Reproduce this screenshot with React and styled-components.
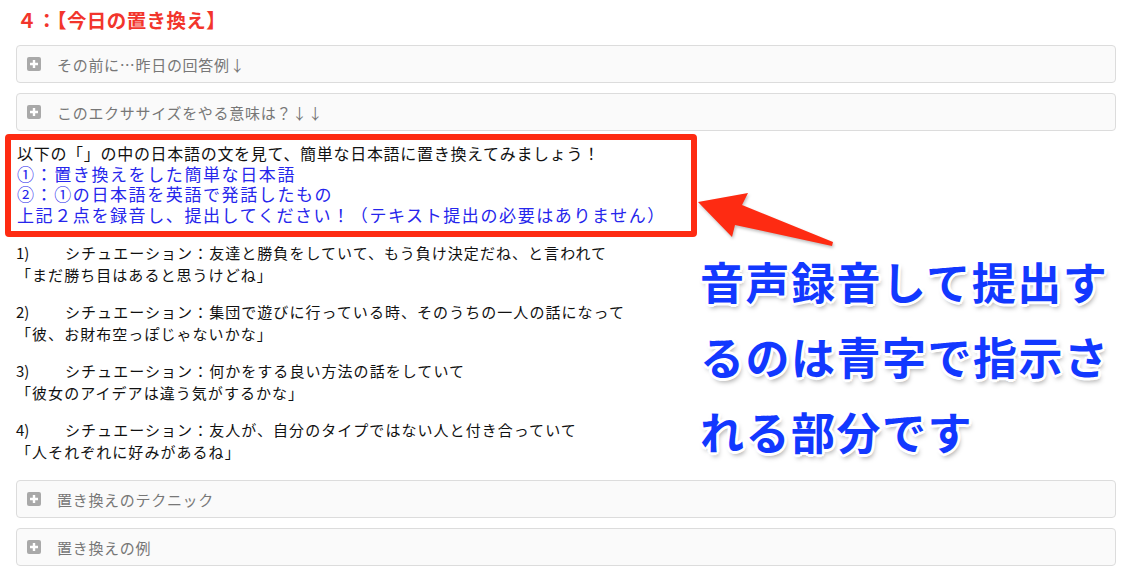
import React from 'react';
import styled, { createGlobalStyle } from 'styled-components';

const GlobalStyle = createGlobalStyle`
  html, body {
    margin: 0;
    padding: 0;
    background: #fff;
  }
  body {
    font-family: "Noto Sans CJK JP", "Noto Sans", sans-serif;
    color: #111;
  }
`;

const Page = styled.div`
  position: relative;
  padding: 6px 18px 0 16px;
`;

const Heading = styled.h2`
  margin: 0 0 11px 1px;
  font-size: 19.5px;
  line-height: 28px;
  font-weight: 700;
  letter-spacing: 0.4px;
  color: #f2352c;
`;

const Panel = styled.div`
  display: flex;
  align-items: center;
  gap: 16px;
  box-sizing: border-box;
  height: 38px;
  margin-top: ${(p) => p.$gap || 0}px;
  padding: 0 10px;
  border: 1px solid #dcdcdc;
  border-radius: 4px;
  background: #fafafa;
  font-size: 15px;
  letter-spacing: 0.7px;
  color: #777;
`;

const PlusBox = styled.span`
  display: flex;
  align-items: center;
  justify-content: center;
  width: 14px;
  height: 14px;
  border-radius: 2px;
  background: #a9a9a9;
  flex-shrink: 0;
`;

const Callout = styled.div`
  box-sizing: border-box;
  width: 692px;
  margin: 3px 0 0 -11px;
  padding: 3px 6px 6px;
  border: 6px solid #fe2b12;
  border-radius: 4px;
  line-height: 20.5px;
`;

const Line = styled.div`
  white-space: nowrap;
  font-size: ${(p) => (p.$blue ? 17 : 16)}px;
  letter-spacing: ${(p) => (p.$blue ? 1.6 : 0.7)}px;
  color: ${(p) => (p.$blue ? '#2626ec' : '#111')};
`;

const Row = styled.div`
  display: flex;
  margin-top: 5px;
`;

const Situations = styled.div`
  width: 684px;
  font-size: 15px;
  line-height: 22px;
  letter-spacing: 1.05px;
`;

const Situation = styled.div`
  & + & {
    margin-top: 15px;
  }
`;

const Num = styled.span`
  display: inline-block;
  width: 49px;
  letter-spacing: 0;
`;

const Note = styled.div`
  padding-top: 2px;
  font-size: 44px;
  line-height: 75px;
  font-weight: 700;
  letter-spacing: 1.5px;
  color: #1238ff;
  white-space: nowrap;
  text-shadow:
    -2px -2px 0 #fff, 2px -2px 0 #fff, -2px 2px 0 #fff, 2px 2px 0 #fff,
    0 -3px 0 #fff, 0 3px 0 #fff, -3px 0 0 #fff, 3px 0 0 #fff,
    2px 4px 5px rgba(0, 0, 0, 0.35);
`;

const NoteLine = styled.span`
  display: block;
`;

const Arrow = styled.svg`
  position: absolute;
  left: 690px;
  top: 185px;
  overflow: visible;
  filter: drop-shadow(1px 2px 1.5px rgba(0, 0, 0, 0.25));
`;

const Plus = () => (
  <PlusBox>
    <svg width="10" height="10" viewBox="0 0 10 10">
      <path d="M5 1v8M1 5h8" stroke="#fff" strokeWidth="2.4" />
    </svg>
  </PlusBox>
);

const Accordion = ({ title, gap }) => (
  <Panel $gap={gap}>
    <Plus />
    <span>{title}</span>
  </Panel>
);

const situations = [
  ['1)', 'シチュエーション：友達と勝負をしていて、もう負け決定だね、と言われて', '「まだ勝ち目はあると思うけどね」'],
  ['2)', 'シチュエーション：集団で遊びに行っている時、そのうちの一人の話になって', '「彼、お財布空っぽじゃないかな」'],
  ['3)', 'シチュエーション：何かをする良い方法の話をしていて', '「彼女のアイデアは違う気がするかな」'],
  ['4)', 'シチュエーション：友人が、自分のタイプではない人と付き合っていて', '「人それぞれに好みがあるね」'],
];

export default function App() {
  return (
    <Page>
      <GlobalStyle />
      <Heading>４：【今日の置き換え】</Heading>
      <Accordion title="その前に…昨日の回答例↓" />
      <Accordion title="このエクササイズをやる意味は？↓↓" gap={10} />

      <Callout>
        <Line>以下の「」の中の日本語の文を見て、簡単な日本語に置き換えてみましょう！</Line>
        <Line $blue>①：置き換えをした簡単な日本語</Line>
        <Line $blue>②：①の日本語を英語で発話したもの</Line>
        <Line $blue>上記２点を録音し、提出してください！（テキスト提出の必要はありません）</Line>
      </Callout>

      <Row>
        <Situations>
          {situations.map(([n, s, q]) => (
            <Situation key={n}>
              <div>
                <Num>{n}</Num>
                {s}
              </div>
              <div>{q}</div>
            </Situation>
          ))}
        </Situations>
        <Note>
          <NoteLine>音声録音して提出す</NoteLine>
          <NoteLine>るのは青字で指示さ</NoteLine>
          <NoteLine>れる部分です</NoteLine>
        </Note>
      </Row>

      <Accordion title="置き換えのテクニック" gap={11} />
      <Accordion title="置き換えの例" gap={10} />

      <Arrow width="150" height="70" viewBox="0 0 150 70">
        <polygon points="8,17 58,8 52,20 143,57 142,61 45,40 42,52" fill="#fe2b12" />
      </Arrow>
    </Page>
  );
}
